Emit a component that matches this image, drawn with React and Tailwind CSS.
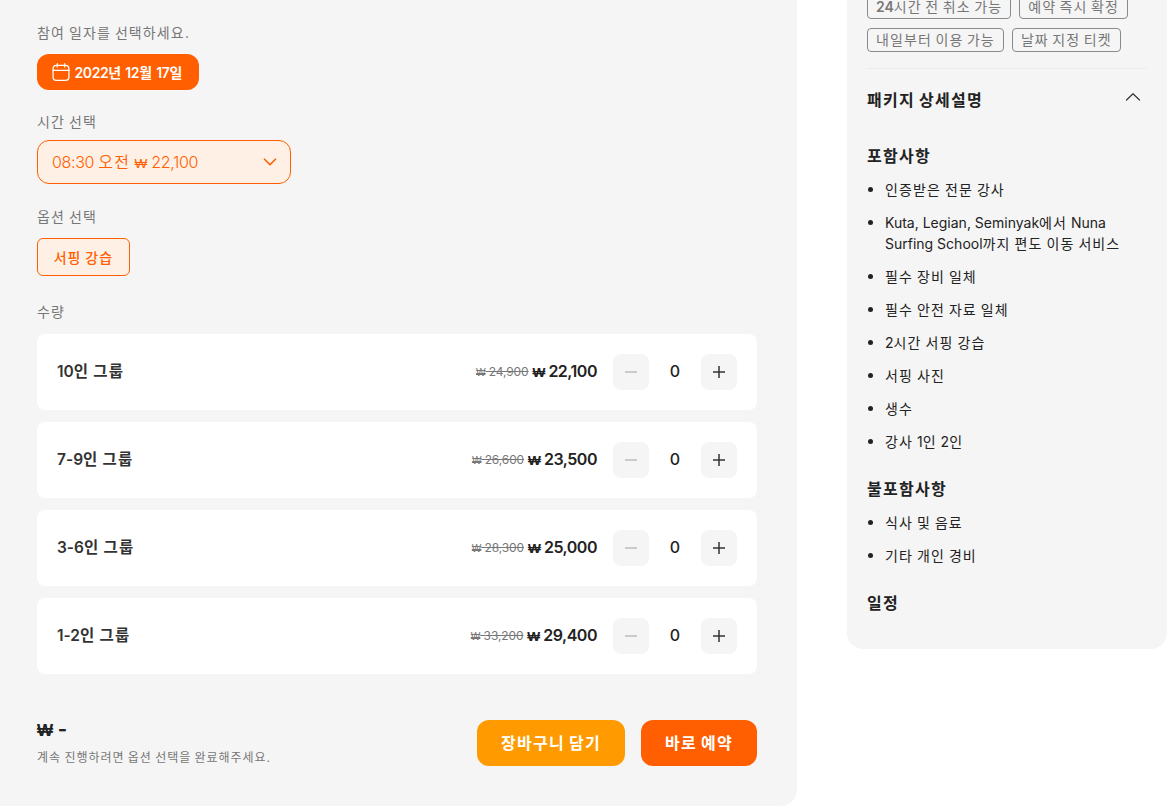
import React from "react";

const FONT = { fontFamily: 'Inter, "Noto Sans CJK KR", sans-serif' };

function T({ children }) {
  const parts = String(children).split(/([가-힣]+|₩)/);
  return (
    <>
      {parts.map((p, i) =>
        p === "₩" ? (
          <span key={i} className="font-['Liberation_Sans'] text-[0.85em]">₩</span>
        ) : /[가-힣]/.test(p) ? (
          <span key={i} className="tracking-[0.08em]">{p}</span>
        ) : (
          p
        )
      )}
    </>
  );
}

const rows = [
  ["10인 그룹", "₩ 24,900", "₩ 22,100"],
  ["7-9인 그룹", "₩ 26,600", "₩ 23,500"],
  ["3-6인 그룹", "₩ 28,300", "₩ 25,000"],
  ["1-2인 그룹", "₩ 33,200", "₩ 29,400"],
];

const included = [
  "인증받은 전문 강사",
  "Kuta, Legian, Seminyak에서 Nuna Surfing School까지 편도 이동 서비스",
  "필수 장비 일체",
  "필수 안전 자료 일체",
  "2시간 서핑 강습",
  "서핑 사진",
  "생수",
  "강사 1인 2인",
];

function Tag({ children }) {
  return (
    <span className="h-6 flex items-center px-2 pb-px border border-[#8a8a8a] rounded text-[14px] leading-none text-[#777777] whitespace-nowrap [word-spacing:-0.5px]">
      <span>{children}</span>
    </span>
  );
}

function Bullets({ items }) {
  return (
    <ul className="flex flex-col gap-3 text-[14px] leading-[21px] text-[#222222]">
      {items.map((t) => (
        <li key={t} className="flex">
          <span className="w-[18px] shrink-0 pt-2 pl-px">
            <span className="block w-[5px] h-[5px] rounded-full bg-[#222222]" />
          </span>
          <span className="min-w-0"><T>{t}</T></span>
        </li>
      ))}
    </ul>
  );
}

export default function App() {
  return (
    <div style={FONT} className="w-[1174px] h-[807px] overflow-hidden bg-white flex items-start">
      <div className="w-[797px] h-[806px] shrink-0 bg-[#f5f5f5] rounded-br-2xl pl-[37px] pr-10 pt-[22px]">
        <p className="text-[14px] leading-[21px] text-[#777777]"><T>참여 일자를 선택하세요.</T></p>
        <button className="mt-[11px] h-9 w-[162px] rounded-xl bg-[#ff5f00] text-white flex items-center justify-center gap-1 pr-[2px] text-[14px] font-semibold tracking-[-0.03em]">
          <svg width="20" height="20" viewBox="0 0 24 24" fill="none" stroke="currentColor" strokeWidth="1.5" strokeLinecap="round" strokeLinejoin="round">
            <rect x="2.5" y="4" width="19" height="18" rx="4" />
            <path d="M2.5 10h19M7.5 2v4M16.5 2v4" />
          </svg>
          <span><T>2022년 12월 17일</T></span>
        </button>

        <p className="mt-[21px] text-[14px] leading-[21px] text-[#777777]"><T>시간 선택</T></p>
        <div className="mt-[8px] h-11 w-[254px] rounded-xl border border-[#ff5f00] bg-[#fff0e6] flex items-center justify-between pl-[14px] pr-[13px] text-[#ff5f00] text-[16px] font-[350] tracking-[-0.02em]">
          <span><T>08:30 오전 ₩ 22,100</T></span>
          <svg width="14" height="14" viewBox="0 0 14 14" fill="none" stroke="currentColor" strokeWidth="1.6" strokeLinecap="round" strokeLinejoin="round">
            <path d="M1.5 4.2L7 9.8l5.500-5.600" />
          </svg>
        </div>

        <p className="mt-[22px] text-[14px] leading-[21px] text-[#777777]"><T>옵션 선택</T></p>
        <div className="mt-[11px] h-[38px] w-[93px] rounded-md border border-[#ff5f00] bg-[#fff0e6] flex items-center justify-center text-[14px] font-medium text-[#ff5f00]">
          <span><T>서핑 강습</T></span>
        </div>

        <p className="mt-[25px] text-[14px] leading-[21px] text-[#777777]"><T>수량</T></p>
        <div className="mt-[12px] flex flex-col gap-3">
          {rows.map(([name, old, price]) => (
            <div key={name} className="h-[76px] bg-white rounded-lg flex items-center pl-5 pr-5">
              <span className="pb-px text-[15.5px] font-semibold text-[#333333]"><T>{name}</T></span>
              <span className="ml-auto text-[12px] text-[#777777] line-through tracking-[-0.01em]"><T>{old}</T></span>
              <span className="ml-1 pb-0.5 text-[16px] font-semibold text-[#222222] tracking-[-0.03em]"><T>{price}</T></span>
              <button className="ml-4 w-9 h-9 rounded-lg bg-[#f5f5f5] flex items-center justify-center text-[#bbbbbb]">
                <svg width="14" height="14" viewBox="0 0 14 14" stroke="currentColor" strokeWidth="1.5"><path d="M1 7h12" /></svg>
              </button>
              <span className="w-[52px] pb-0.5 text-center text-[16px] font-medium text-[#222222]">0</span>
              <button className="w-9 h-9 rounded-lg bg-[#f5f5f5] flex items-center justify-center text-[#333333]">
                <svg width="14" height="14" viewBox="0 0 14 14" stroke="currentColor" strokeWidth="1.5"><path d="M1 7h12M7 1v12" /></svg>
              </button>
            </div>
          ))}
        </div>

        <div className="mt-[46px] flex items-start justify-between">
          <div className="-mt-[3px]">
            <div className="text-[20px] leading-[24px] font-bold text-[#222222]"><T>₩ -</T></div>
            <p className="mt-[6px] text-[12px] leading-[18px] text-[#777777]"><T>계속 진행하려면 옵션 선택을 완료해주세요.</T></p>
          </div>
          <div className="flex gap-4">
            <button className="h-[46px] w-[148px] rounded-xl bg-[#ff9b00] text-white text-[16px] font-semibold"><T>장바구니 담기</T></button>
            <button className="h-[46px] w-[116px] rounded-xl bg-[#ff5f00] text-white text-[16px] font-semibold"><T>바로 예약</T></button>
          </div>
        </div>
      </div>

      <div className="ml-[50px] w-[320px] shrink-0 h-[649px] bg-[#f5f5f5] rounded-b-2xl px-5 overflow-hidden">
        <div className="-mt-[5px] flex gap-2">
          <Tag><b className="font-semibold">24</b><T>시간 전 취소 가능</T></Tag>
          <Tag><T>예약 즉시 확정</T></Tag>
        </div>
        <div className="mt-[9px] flex gap-2">
          <Tag><T>내일부터 이용 가능</T></Tag>
          <Tag><T>날짜 지정 티켓</T></Tag>
        </div>
        <div className="mt-4 border-t border-[#ebebeb]" />
        <div className="mt-[19px] flex items-center justify-between">
          <h3 className="text-[16px] leading-[24px] font-semibold text-[#222222]"><T>패키지 상세설명</T></h3>
          <svg className="mr-[6px] mb-[6px]" width="16" height="16" viewBox="0 0 16 16" fill="none" stroke="#333333" strokeWidth="1.2" strokeLinecap="round" strokeLinejoin="round">
            <path d="M1.500 11L8 4.700 14.500 11" />
          </svg>
        </div>
        <h4 className="mt-[32px] text-[16px] leading-[24px] font-semibold text-[#222222]"><T>포함사항</T></h4>
        <div className="mt-[11px]"><Bullets items={included} /></div>
        <h4 className="mt-[25px] text-[16px] leading-[24px] font-semibold text-[#222222]"><T>불포함사항</T></h4>
        <div className="mt-[11px]"><Bullets items={["식사 및 음료", "기타 개인 경비"]} /></div>
        <h4 className="mt-[25px] text-[16px] leading-[24px] font-semibold text-[#222222]"><T>일정</T></h4>
      </div>
    </div>
  );
}
